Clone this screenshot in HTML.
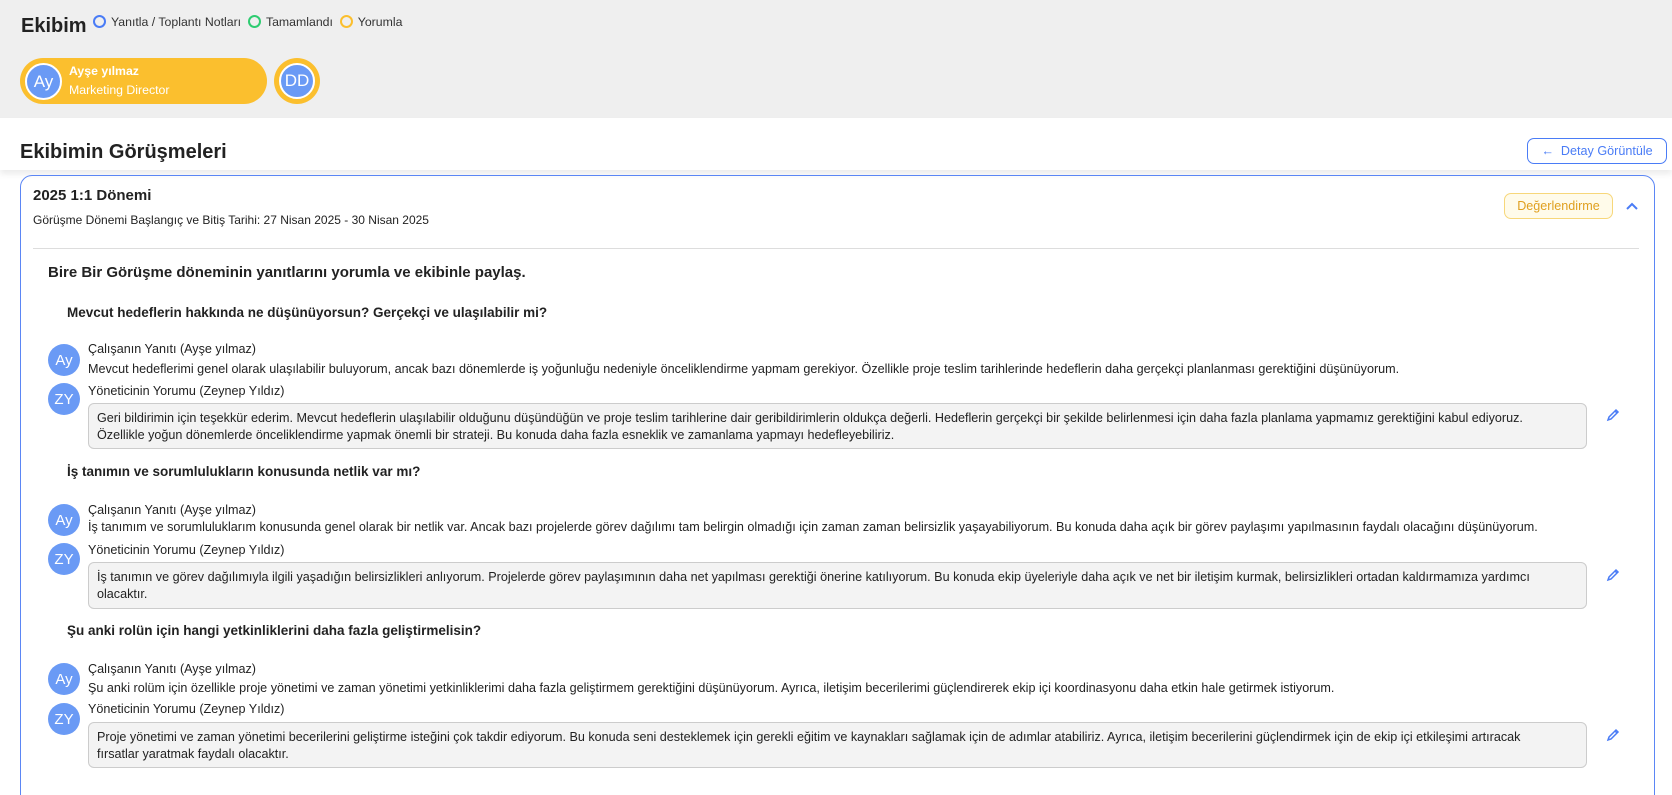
<!DOCTYPE html>
<html><head><meta charset="utf-8">
<style>
*{box-sizing:border-box;margin:0;padding:0}
html,body{width:1672px;height:795px;overflow:hidden}
body{background:#fff;font-family:"Liberation Sans",sans-serif;color:#222;position:relative}
#wrap{position:absolute;left:0;top:0;width:1672px;height:795px;overflow:hidden}
.abs{position:absolute}
.top{left:0;top:0;width:1672px;height:118px;background:#efefef}
.leg{display:inline-block;width:13px;height:13px;border-radius:50%;border:2.5px solid;vertical-align:-2px;margin-right:5px}
.av{border-radius:50%;background:#6a9af5;color:#fff;display:flex;align-items:center;justify-content:center}
.t13{font-size:12.6px;white-space:nowrap}
.box{left:88px;width:1499px;background:#f3f3f3;border:1px solid #ccc;border-radius:6px;padding:6px 40px 6px 8px;font-size:12.6px;line-height:17px;color:#222}
.pen{left:1606px}
</style></head><body><div id="wrap">
<div class="abs top"></div>
<div class="abs" style="left:21px;top:15px;font-size:20px;font-weight:bold;color:#222">Ekibim</div>
<div class="abs t13" style="left:93px;top:15px;font-size:12.3px;color:#333">
<span class="leg" style="border-color:#4a7cf6"></span>Yanıtla / Toplantı Notları&nbsp;&nbsp;<span class="leg" style="border-color:#2ecc71"></span>Tamamlandı&nbsp;&nbsp;<span class="leg" style="border-color:#fbbf2e"></span>Yorumla</div>
<div class="abs" style="left:20px;top:58px;width:247px;height:46px;border-radius:23px;background:#fbbf2e"></div>
<div class="abs av" style="left:25px;top:63px;width:37px;height:37px;border:2px solid #fff;font-size:17px">Ay</div>
<div class="abs" style="left:69px;top:64px;color:#fff;font-size:12.3px;font-weight:bold">Ayşe yılmaz</div>
<div class="abs" style="left:69px;top:83px;color:#fff;font-size:12.3px">Marketing Director</div>
<div class="abs" style="left:274px;top:58px;width:46px;height:46px;border-radius:50%;background:#fbbf2e"></div>
<div class="abs av" style="left:279px;top:63px;width:36px;height:36px;border:2px solid #fff;font-size:17px">DD</div>

<div class="abs" style="left:0;top:118px;width:1672px;height:52px;box-shadow:0 4px 6px rgba(0,0,0,.08);background:#fff"></div>
<div class="abs" style="left:20px;top:141px;font-size:20px;font-weight:bold;color:#222">Ekibimin Görüşmeleri</div>
<div class="abs" style="left:1527px;top:138px;width:140px;height:26px;border:1px solid #4a7cf6;border-radius:7px;color:#4a7cf6;font-size:12.6px;line-height:24px;text-align:center">←&nbsp; Detay Görüntüle</div>

<div class="abs" style="left:20px;top:175px;width:1635px;height:680px;border:1.5px solid #5b86f5;border-radius:12px"></div>
<div class="abs" style="left:33px;top:187px;font-size:15px;font-weight:bold">2025 1:1 Dönemi</div>
<div class="abs t13" style="left:33px;top:213px;font-size:12px">Görüşme Dönemi Başlangıç ve Bitiş Tarihi: 27 Nisan 2025 - 30 Nisan 2025</div>
<div class="abs" style="left:1504px;top:193px;width:109px;height:26px;background:#fffbea;border:1px solid #f7d77a;border-radius:7px;color:#e0a020;font-size:12.6px;line-height:24px;text-align:center">Değerlendirme</div>
<svg class="abs" style="left:1625px;top:201px" width="14" height="10"><path d="M2 8 L7 3 L12 8" stroke="#4a7cf6" stroke-width="2" fill="none"/></svg>
<div class="abs" style="left:33px;top:248px;width:1606px;height:1px;background:#ddd"></div>
<div class="abs" style="left:48px;top:264px;font-size:15px;font-weight:bold">Bire Bir Görüşme döneminin yanıtlarını yorumla ve ekibinle paylaş.</div>

<div class="abs t13" style="left:67px;top:305px;font-weight:bold;font-size:13.5px">Mevcut hedeflerin hakkında ne düşünüyorsun? Gerçekçi ve ulaşılabilir mi?</div>
<div class="abs av" style="left:48px;top:344px;width:32px;height:32px;font-size:15px">Ay</div>
<div class="abs t13" style="left:88px;top:342px">Çalışanın Yanıtı (Ayşe yılmaz)</div>
<div class="abs t13" style="left:88px;top:362px">Mevcut hedeflerimi genel olarak ulaşılabilir buluyorum, ancak bazı dönemlerde iş yoğunluğu nedeniyle önceliklendirme yapmam gerekiyor. Özellikle proje teslim tarihlerinde hedeflerin daha gerçekçi planlanması gerektiğini düşünüyorum.</div>
<div class="abs av" style="left:48px;top:383px;width:32px;height:32px;font-size:15px">ZY</div>
<div class="abs t13" style="left:88px;top:384px">Yöneticinin Yorumu (Zeynep Yıldız)</div>
<div class="abs box" style="top:403px;height:46px">Geri bildirimin için teşekkür ederim. Mevcut hedeflerin ulaşılabilir olduğunu düşündüğün ve proje teslim tarihlerine dair geribildirimlerin oldukça değerli. Hedeflerin gerçekçi bir şekilde belirlenmesi için daha fazla planlama yapmamız gerektiğini kabul ediyoruz.<br>Özellikle yoğun dönemlerde önceliklendirme yapmak önemli bir strateji. Bu konuda daha fazla esneklik ve zamanlama yapmayı hedefleyebiliriz.</div>
<svg class="abs pen" style="top:408px" width="14" height="14"><path d="M2 12 L3 9 L10 2 L12 4 L5 11 Z" stroke="#4a7cf6" stroke-width="1.5" fill="none"/><path d="M9 3 L11 5" stroke="#4a7cf6" stroke-width="1.5"/></svg>

<div class="abs t13" style="left:67px;top:464px;font-weight:bold;font-size:13.5px">İş tanımın ve sorumlulukların konusunda netlik var mı?</div>
<div class="abs av" style="left:48px;top:504px;width:32px;height:32px;font-size:15px">Ay</div>
<div class="abs t13" style="left:88px;top:503px">Çalışanın Yanıtı (Ayşe yılmaz)</div>
<div class="abs t13" style="left:88px;top:520px">İş tanımım ve sorumluluklarım konusunda genel olarak bir netlik var. Ancak bazı projelerde görev dağılımı tam belirgin olmadığı için zaman zaman belirsizlik yaşayabiliyorum. Bu konuda daha açık bir görev paylaşımı yapılmasının faydalı olacağını düşünüyorum.</div>
<div class="abs av" style="left:48px;top:543px;width:32px;height:32px;font-size:15px">ZY</div>
<div class="abs t13" style="left:88px;top:543px">Yöneticinin Yorumu (Zeynep Yıldız)</div>
<div class="abs box" style="top:562px;height:47px">İş tanımın ve görev dağılımıyla ilgili yaşadığın belirsizlikleri anlıyorum. Projelerde görev paylaşımının daha net yapılması gerektiği önerine katılıyorum. Bu konuda ekip üyeleriyle daha açık ve net bir iletişim kurmak, belirsizlikleri ortadan kaldırmamıza yardımcı<br>olacaktır.</div>
<svg class="abs pen" style="top:568px" width="14" height="14"><path d="M2 12 L3 9 L10 2 L12 4 L5 11 Z" stroke="#4a7cf6" stroke-width="1.5" fill="none"/><path d="M9 3 L11 5" stroke="#4a7cf6" stroke-width="1.5"/></svg>

<div class="abs t13" style="left:67px;top:623px;font-weight:bold;font-size:13.5px">Şu anki rolün için hangi yetkinliklerini daha fazla geliştirmelisin?</div>
<div class="abs av" style="left:48px;top:663px;width:32px;height:32px;font-size:15px">Ay</div>
<div class="abs t13" style="left:88px;top:662px">Çalışanın Yanıtı (Ayşe yılmaz)</div>
<div class="abs t13" style="left:88px;top:681px">Şu anki rolüm için özellikle proje yönetimi ve zaman yönetimi yetkinliklerimi daha fazla geliştirmem gerektiğini düşünüyorum. Ayrıca, iletişim becerilerimi güçlendirerek ekip içi koordinasyonu daha etkin hale getirmek istiyorum.</div>
<div class="abs av" style="left:48px;top:703px;width:32px;height:32px;font-size:15px">ZY</div>
<div class="abs t13" style="left:88px;top:702px">Yöneticinin Yorumu (Zeynep Yıldız)</div>
<div class="abs box" style="top:722px;height:46px">Proje yönetimi ve zaman yönetimi becerilerini geliştirme isteğini çok takdir ediyorum. Bu konuda seni desteklemek için gerekli eğitim ve kaynakları sağlamak için de adımlar atabiliriz. Ayrıca, iletişim becerilerini güçlendirmek için de ekip içi etkileşimi artıracak<br>fırsatlar yaratmak faydalı olacaktır.</div>
<svg class="abs pen" style="top:728px" width="14" height="14"><path d="M2 12 L3 9 L10 2 L12 4 L5 11 Z" stroke="#4a7cf6" stroke-width="1.5" fill="none"/><path d="M9 3 L11 5" stroke="#4a7cf6" stroke-width="1.5"/></svg>
</div></body></html>
